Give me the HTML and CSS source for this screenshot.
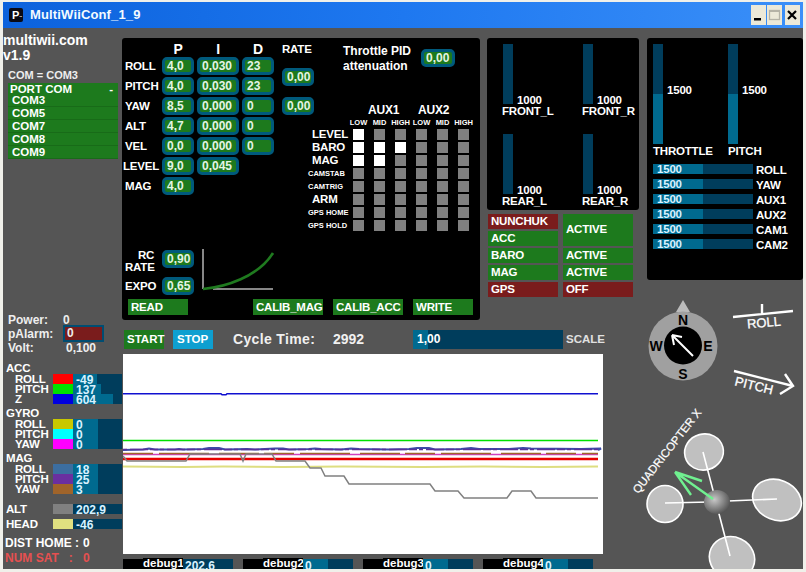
FILE: index.html
```html
<!DOCTYPE html>
<html lang="en">
<head>
<meta charset="utf-8">
<title>MultiWiiConf_1_9</title>
<link rel="stylesheet" href="styles.css">
</head>
<body>
<div class="window">
  <header class="titlebar">
    <span class="app-icon">P<small>..</small></span>
    <span class="app-title">MultiWiiConf_1_9</span>
    <div class="win-btns">
      <span class="win-btn"><svg width="14" height="20" viewBox="0 0 14 20"><rect x="3" y="13" width="7" height="2.5" fill="#000"/></svg></span>
      <span class="win-btn"><svg width="14" height="20" viewBox="0 0 14 20"><rect x="2.5" y="5.5" width="10" height="9" fill="none" stroke="#b5b3a6" stroke-width="1.3"/><rect x="2.5" y="5.5" width="10" height="1.5" fill="#b5b3a6"/></svg></span>
      <span class="win-btn close"><svg width="14" height="20" viewBox="0 0 14 20"><path d="M3 6l8 8M11 6l-8 8" stroke="#000" stroke-width="2.2" fill="none"/></svg></span>
    </div>
  </header>
  <div class="client">
    <aside class="sidebar">
      <div class="brand">multiwii.com<br>v1.9</div>
      <div class="com-current">COM = COM3</div>
      <div class="port-list">
        <div class="port-head"><span>PORT COM</span><span>-</span></div>
        <div class="port-item">COM3</div>
        <div class="port-item">COM5</div>
        <div class="port-item">COM7</div>
        <div class="port-item">COM8</div>
        <div class="port-item">COM9</div>
      </div>
      <div class="power">
        <span>Power:</span><span class="power-val">0</span>
        <span>pAlarm:</span><span class="alarm">0</span>
        <span>Volt:</span><span class="volt-val">0,100</span>
      </div>
      <div class="sensor-group first">
        <div class="group-title">ACC</div>
        <div class="sensor-row"><span class="sub">ROLL</span><i class="sw c-red"></i><span class="val" style="--fill:24px">-49</span></div>
        <div class="sensor-row"><span class="sub">PITCH</span><i class="sw c-green"></i><span class="val" style="--fill:28px">137</span></div>
        <div class="sensor-row"><span class="sub">Z</span><i class="sw c-blue"></i><span class="val" style="--fill:40px">604</span></div>
      </div>
      <div class="sensor-group">
        <div class="group-title">GYRO</div>
        <div class="sensor-row"><span class="sub">ROLL</span><i class="sw c-olive"></i><span class="val" style="--fill:25px">0</span></div>
        <div class="sensor-row"><span class="sub">PITCH</span><i class="sw c-cyan"></i><span class="val" style="--fill:25px">0</span></div>
        <div class="sensor-row"><span class="sub">YAW</span><i class="sw c-magenta"></i><span class="val" style="--fill:25px">0</span></div>
      </div>
      <div class="sensor-group">
        <div class="group-title">MAG</div>
        <div class="sensor-row"><span class="sub">ROLL</span><i class="sw c-steel"></i><span class="val" style="--fill:25px">18</span></div>
        <div class="sensor-row"><span class="sub">PITCH</span><i class="sw c-purple"></i><span class="val" style="--fill:25px">25</span></div>
        <div class="sensor-row"><span class="sub">YAW</span><i class="sw c-brown"></i><span class="val" style="--fill:25px">3</span></div>
      </div>
      <div class="sensor-row alt-row"><span>ALT</span><i class="sw c-grey"></i><span class="val" style="--fill:0px">202,9</span></div>
      <div class="sensor-row head-row"><span>HEAD</span><i class="sw c-khaki"></i><span class="val" style="--fill:0px">-46</span></div>
      <div class="gps gps-dist"><span>DIST HOME :</span><span>0</span></div>
      <div class="gps gps-sat"><span>NUM SAT &nbsp; :</span><span>0</span></div>
    </aside>

    <main class="main">
      <div class="top-row">
        <section class="panel pid-panel">
          <div class="pid-upper">
            <div class="pid-table">
              <span></span><b class="col-head">P</b><b class="col-head">I</b><b class="col-head">D</b><b class="rate-head">RATE</b>
              <span class="row-label">ROLL</span><span class="field">4,0</span><span class="field">0,030</span><span class="field">23</span><span class="field rate-a">0,00</span>
              <span class="row-label">PITCH</span><span class="field">4,0</span><span class="field">0,030</span><span class="field">23</span>
              <span class="row-label">YAW</span><span class="field">8,5</span><span class="field">0,000</span><span class="field">0</span><span class="field rate-b">0,00</span>
              <span class="row-label">ALT</span><span class="field">4,7</span><span class="field">0,000</span><span class="field">0</span><span></span>
              <span class="row-label">VEL</span><span class="field">0,0</span><span class="field">0,000</span><span class="field">0</span><span></span>
              <span class="row-label level">LEVEL</span><span class="field">9,0</span><span class="field">0,045</span><span></span><span></span>
              <span class="row-label">MAG</span><span class="field">4,0</span>
            </div>
            <div class="pid-right">
              <div class="throttle">
                <div class="throttle-label">Throttle PID<br>attenuation</div>
                <span class="field">0,00</span>
              </div>
              <div class="aux-grid">
                <span></span><b class="aux-name a1">AUX1</b><b class="aux-name a2">AUX2</b>
                <span></span><em>LOW</em><em>MID</em><em>HIGH</em><em>LOW</em><em>MID</em><em>HIGH</em>
                <span class="aux-label">LEVEL</span><i class="box on"></i><i class="box"></i><i class="box"></i><i class="box"></i><i class="box"></i><i class="box"></i>
                <span class="aux-label">BARO</span><i class="box on"></i><i class="box on"></i><i class="box on"></i><i class="box"></i><i class="box"></i><i class="box"></i>
                <span class="aux-label">MAG</span><i class="box on"></i><i class="box on"></i><i class="box"></i><i class="box"></i><i class="box"></i><i class="box"></i>
                <span class="aux-label small">CAMSTAB</span><i class="box"></i><i class="box"></i><i class="box"></i><i class="box"></i><i class="box"></i><i class="box"></i>
                <span class="aux-label small">CAMTRIG</span><i class="box"></i><i class="box"></i><i class="box"></i><i class="box"></i><i class="box"></i><i class="box"></i>
                <span class="aux-label">ARM</span><i class="box"></i><i class="box"></i><i class="box"></i><i class="box"></i><i class="box"></i><i class="box"></i>
                <span class="aux-label small">GPS HOME</span><i class="box"></i><i class="box"></i><i class="box"></i><i class="box"></i><i class="box"></i><i class="box"></i>
                <span class="aux-label small">GPS HOLD</span><i class="box"></i><i class="box"></i><i class="box"></i><i class="box"></i><i class="box"></i><i class="box"></i>
              </div>
            </div>
          </div>
          <div class="rc-row">
            <div class="rc-fields">
              <span class="row-label rc-label">RC<br>RATE</span><span class="field">0,90</span>
              <span class="row-label">EXPO</span><span class="field">0,65</span>
            </div>
            <svg class="curve" width="76" height="46" viewBox="200 248 76 46">
              <path d="M203 249V289M213 289H273" stroke="#b4b4b4" stroke-width="1.5" fill="none"/>
              <path d="M203 289C225 287 258 277 273 253" stroke="#1f7a1f" stroke-width="2.6" fill="none"/>
            </svg>
          </div>
          <div class="pid-btns">
            <span class="btn b-read">READ</span>
            <span class="btn b-mag">CALIB_MAG</span>
            <span class="btn b-acc">CALIB_ACC</span>
            <span class="btn b-write">WRITE</span>
          </div>
        </section>

        <div class="motor-col">
          <section class="panel motor-panel">
            <div class="motor"><div class="motor-top"><i class="motor-bar"></i><span>1000</span></div><div class="motor-name">FRONT_L</div></div>
            <div class="motor"><div class="motor-top"><i class="motor-bar"></i><span>1000</span></div><div class="motor-name">FRONT_R</div></div>
            <div class="motor"><div class="motor-top"><i class="motor-bar"></i><span>1000</span></div><div class="motor-name">REAR_L</div></div>
            <div class="motor"><div class="motor-top"><i class="motor-bar"></i><span>1000</span></div><div class="motor-name">REAR_R</div></div>
          </section>
          <div class="status-grid">
            <span class="st red">NUNCHUK</span><span class="st tall">ACTIVE</span>
            <span class="st">ACC</span>
            <span class="st">BARO</span><span class="st">ACTIVE</span>
            <span class="st">MAG</span><span class="st">ACTIVE</span>
            <span class="st red">GPS</span><span class="st red">OFF</span>
          </div>
        </div>

        <section class="panel rc-panel">
          <div class="sticks">
            <div class="stick"><div class="stick-top"><i class="stick-bar"></i><span>1500</span></div><div class="stick-name">THROTTLE</div></div>
            <div class="stick"><div class="stick-top"><i class="stick-bar"></i><span>1500</span></div><div class="stick-name">PITCH</div></div>
          </div>
          <div class="channels">
            <div class="channel"><span class="ch-bar">1500</span><span>ROLL</span></div>
            <div class="channel"><span class="ch-bar">1500</span><span>YAW</span></div>
            <div class="channel"><span class="ch-bar">1500</span><span>AUX1</span></div>
            <div class="channel"><span class="ch-bar">1500</span><span>AUX2</span></div>
            <div class="channel"><span class="ch-bar">1500</span><span>CAM1</span></div>
            <div class="channel"><span class="ch-bar">1500</span><span>CAM2</span></div>
          </div>
        </section>
      </div>

      <div class="controls">
        <span class="ctl start">START</span>
        <span class="ctl stop">STOP</span>
        <span class="cycle-label">Cycle Time:</span>
        <span class="cycle-val">2992</span>
        <span class="scale-bar">1,00</span>
        <span class="scale-label">SCALE</span>
      </div>

      <svg class="graph" width="480" height="200" viewBox="123 354 480 200">
        <rect x="123" y="354" width="480" height="200" fill="#fff"/>
        <g fill="none">
          <path d="M123 393.7H221l1 1h4l1-1H598" stroke="#1010d0" stroke-width="1.5"/>
          <path d="M123 440.5H598" stroke="#00e000" stroke-width="1.6"/>
          <path d="M123 454.5H598" stroke="#d040c0" stroke-width="1.5"/>
          <path d="M123 453.5H598" stroke="#a0642a" stroke-width="1.6" stroke-dasharray="30 6 50 10 40 5"/>
          <path d="M123 450l20-.5 6-1 6 1 20 0 4-.5 4 .5 20-.5 6-1 10 0 6 1.5 22-.5 8 .5 20-1 8 0 6 1 20-.5 6-.5 6 .5 20 .5 10-1 8 .5 30 .5 20-.5 8-1 12 0 6 1.5 26-.5 10-1 8 1 30 0 14-1 8 .5 50 .5 20-.5L598 450" stroke="#3c4ca8" stroke-width="2.2"/>
          <path d="M123 449.5 H598" stroke="#5a2f98" stroke-width="1.6" stroke-dasharray="4 3 18 2 8 2"/>
          <path d="M123 459H598" stroke="#e80000" stroke-width="2.4"/>
          <path d="M123 466.5l60 .5 40-.5 60 .5 60-.5 80 .5 60-.5 60 .5L598 466.5" stroke="#dede80" stroke-width="2"/>
          <path d="M123 456l4 5h59l4-7H240l3 7 3-7h26l4 7h29l5 7h11l4 8h19l5 8h81l5 7h23l6 7h43l5-7h19l5 7h62" stroke="#808080" stroke-width="1.5"/>
        </g>
      </svg>

      <div class="debug-row">
        <div class="debug"><i></i><span class="debug-name">debug1</span><span class="debug-val" style="--fill:0px">202,6</span></div>
        <div class="debug"><i></i><span class="debug-name">debug2</span><span class="debug-val" style="--fill:25px">0</span></div>
        <div class="debug"><i></i><span class="debug-name">debug3</span><span class="debug-val" style="--fill:25px">0</span></div>
        <div class="debug"><i></i><span class="debug-name">debug4</span><span class="debug-val" style="--fill:25px">0</span></div>
      </div>

      <svg class="attitude" width="186" height="279" viewBox="617 290 186 279">
        <!-- compass -->
        <path d="M683 300l7 12h-3v8h-8v-8h-3z" fill="#bcbcbc"/>
        <circle cx="683" cy="346" r="34.5" fill="#a0a0a0"/>
        <circle cx="683" cy="345.5" r="19" fill="#000"/>
        <g class="compass-letter">
          <text x="683" y="325">N</text>
          <text x="683" y="379">S</text>
          <text x="656" y="351">W</text>
          <text x="708" y="351">E</text>
        </g>
        <path d="M693 356L672 335M672 335l10 2M672 335l2 10" stroke="#fff" stroke-width="2" fill="none"/>
        <!-- roll -->
        <path d="M733 317L793 311M762 304V314" stroke="#fff" stroke-width="2.4" fill="none"/>
        <text class="att-label" x="764" y="327" transform="rotate(-5 764 323)">ROLL</text>
        <!-- pitch -->
        <path d="M734 371L793 386M785 374L793 386L780 394" stroke="#fff" stroke-width="2.4" fill="none"/>
        <text class="att-label" x="754" y="390" transform="rotate(14 754 386)">PITCH</text>
        <!-- quad -->
        <g stroke="#fff" fill="#c0c0c0">
          <ellipse cx="704" cy="452" rx="19.5" ry="18" stroke-width="1.6" transform="rotate(-15 704 452)"/>
          <ellipse cx="665" cy="504" rx="18" ry="18.5" stroke-width="1.6"/>
          <ellipse cx="777" cy="500" rx="25" ry="20" stroke-width="1.6" transform="rotate(22 777 500)"/>
          <ellipse cx="732" cy="558" rx="23" ry="21" stroke-width="1.6" transform="rotate(25 732 558)"/>
          <path d="M703 452L715 498M665 503L710 502M777 499L728 501M730 556L718 510" stroke-width="1.6" fill="none"/>
        </g>
        <defs>
          <radialGradient id="hub" cx="40%" cy="40%" r="65%">
            <stop offset="0" stop-color="#c8c8c8"/>
            <stop offset="1" stop-color="#505050"/>
          </radialGradient>
        </defs>
        <ellipse cx="717" cy="502" rx="13" ry="12" fill="url(#hub)"/>
        <path d="M713 499L675 472M675 472L702 481M675 472L691 495" stroke="#70f090" stroke-width="2.4" fill="none"/>
        <text class="quad-label" x="667" y="455" transform="rotate(-52 667 451)">QUADRICOPTER X</text>
      </svg>
    </main>
  </div>
</div>
</body>
</html>
```

FILE: styles.css
```css
* { box-sizing: border-box; }
html, body { margin: 0; padding: 0; background: #ece9d8; }
body {
  font-family: "Liberation Sans", Arial, sans-serif;
  font-size: 11.5px;
  letter-spacing: -.2px;
  font-weight: 700;
  color: #fff;
  line-height: 12px;
}
i, em { font-style: normal; display: block; }

.window {
  width: 806px;
  height: 572px;
  display: flex;
  flex-direction: column;
  border-style: solid;
  border-color: #f0f0ea;
  border-width: 2px 3px 3px 3px;
}

/* title bar */
.titlebar {
  height: 26px;
  flex: none;
  display: flex;
  align-items: center;
  padding: 0 3px 0 6px;
  background: linear-gradient(90deg, #0c62dc, #1e78f0 50%, #3a8ff8);
}
.app-icon {
  width: 14px;
  height: 14px;
  background: #0a0a14;
  border-radius: 2px;
  font-size: 11px;
  line-height: 14px;
  padding-left: 3px;
  display: flex;
}
.app-icon small { font-size: 6px; }
.app-title {
  margin-left: 7px;
  font-size: 13px;
  letter-spacing: .15px;
  color: #f4fbff;
}
.win-btns { margin-left: auto; display: flex; gap: 1px; }
.win-btn {
  width: 15px;
  height: 20px;
  background: #ece9d8;
  display: block;
}
.win-btn svg { display: block; }
.win-btn.close { margin-left: 2px; }

/* client */
.client {
  flex: 1;
  display: flex;
  background: #555;
  min-height: 0;
}

/* sidebar */
.sidebar { width: 119px; flex: none; padding-top: 5px; }
.brand { font-size: 14px; line-height: 15px; letter-spacing: 0; }
.com-current { margin: 6px 0 0 5px; color: #eee; font-size: 11px; letter-spacing: 0; }
.port-list { margin: 2px 0 0 5px; width: 110px; background: #1d7a1d; }
.port-head { display: flex; justify-content: space-between; padding: 0 5px 0 2px; height: 11px; line-height: 12px; letter-spacing: 0; }
.port-item { height: 13px; padding-left: 4px; line-height: 13px; border-bottom: 1px solid #186b18; letter-spacing: 0; }

.power {
  margin: 156px 0 0 5px;
  display: grid;
  grid-template-columns: 55px 41px;
  grid-template-rows: 10px 17px 12px;
  align-items: center;
  color: #eee;
  font-size: 12px;
  letter-spacing: 0;
}
.alarm {
  height: 17px;
  border: 2px solid #004d72;
  background: #7a1c1c;
  padding-left: 2px;
  line-height: 13px;
}
.volt-val { padding-left: 3px; }

.sensor-group { margin: 3px 0 0 3px; }
.sensor-group.first { margin-top: 8px; }
.group-title { height: 12px; }
.sensor-row {
  display: grid;
  grid-template-columns: 47px 20px 49px;
  height: 10px;
  line-height: 10px;
}
.sub { padding-left: 9px; }
.sw { height: 10px; }
.val {
  padding-left: 3px;
  font-size: 12px;
  line-height: 12px;
  height: 10px;
  letter-spacing: 0;
  color: #d8f2ff;
  background: linear-gradient(90deg, #006a8f var(--fill), #003d5c var(--fill));
}
.alt-row { margin: 10px 0 0 3px; }
.head-row { margin: 5px 0 0 3px; }
.c-red { background: #f00; }
.c-green { background: #00e000; }
.c-blue { background: #0000e0; }
.c-olive { background: #c8c800; }
.c-cyan { background: #00ffff; }
.c-magenta { background: #ff00ff; }
.c-steel { background: #3c6ea0; }
.c-purple { background: #6a2fa0; }
.c-brown { background: #a0642a; }
.c-grey { background: #808080; }
.c-khaki { background: #e0e080; }

.gps { display: grid; grid-template-columns: 78px auto; margin-left: 2px; font-size: 12px; letter-spacing: 0; }
.gps-dist { margin-top: 8px; }
.gps-sat { margin-top: 3px; color: #e65050; }

/* main */
.main { flex: 1; min-width: 0; position: relative; padding-top: 10px; }
.top-row { display: flex; align-items: flex-start; }
.panel { background: #000; border-radius: 3px; }

/* PID panel */
.pid-panel { width: 358px; height: 282px; margin-right: 7px; padding-left: 3px; }
.pid-upper { display: flex; height: 212px; }
.pid-table {
  width: 189px;
  margin-right: -6px;
  padding-top: 4px;
  display: grid;
  grid-template-columns: 34px 32px 42px 32px 37px;
  grid-template-rows: 15px repeat(7, 20px);
  column-gap: 3px;
  align-items: start;
  align-self: flex-start;
  flex: none;
}
.col-head { font-size: 14px; line-height: 14px; text-align: center; }
.rate-head { line-height: 14px; margin-left: 5px; white-space: nowrap; }
.row-label { line-height: 18px; white-space: nowrap; }
.row-label.level { margin-left: -2px; }
.field {
  display: block;
  height: 18px;
  border: 3px solid #005a7c;
  border-radius: 5px;
  background: #1d7a1d;
  padding-left: 2px;
  line-height: 12px;
  font-size: 12px;
  letter-spacing: 0;
  color: #e4f5e4;
}
.rate-a { grid-column: 5; grid-row: 2 / span 2; margin: 11px 0 0 5px; }
.rate-b { grid-column: 5; grid-row: 4; margin-left: 5px; }

.pid-right { width: 171px; flex: none; }
.throttle { display: flex; align-items: flex-start; padding: 6px 0 0 35px; height: 66px; }
.throttle-label { width: 78px; font-size: 12px; line-height: 15px; letter-spacing: 0; }
.throttle .field { width: 34px; margin-top: 5px; }
.aux-grid {
  display: grid;
  grid-template-columns: 35px repeat(6, 11px);
  grid-template-rows: 12px 9px repeat(8, 11px);
  column-gap: 10px;
  row-gap: 2px;
}
.aux-name { grid-column: span 3; white-space: nowrap; font-size: 12px; }
.aux-name.a1 { padding-left: 15px; }
.aux-name.a2 { padding-left: 2px; }
.aux-grid em { font-size: 7.5px; line-height: 9px; display: flex; justify-content: center; white-space: nowrap; letter-spacing: 0; }
.aux-label { padding-left: 4px; line-height: 11px; white-space: nowrap; }
.aux-label.small { padding-left: 0; font-size: 7.5px; letter-spacing: 0; }
.box { background: #808080; height: 11px; }
.box.on { background: #fff; }

.rc-row { display: flex; height: 49px; }
.rc-fields {
  display: grid;
  grid-template-columns: 37px 32px;
  grid-template-rows: 27px 18px;
  align-items: center;
}
.rc-fields .field { align-self: start; }
.rc-label { line-height: 12px; text-indent: 13px; align-self: start; margin-top: -1px; }
.curve { display: block; margin-left: 6px; margin-top: -2px; }

.pid-btns { display: flex; padding-left: 3px; }
.btn { display: block; height: 16px; background: #1d7a1d; padding-left: 3px; line-height: 16px; white-space: nowrap; }
.b-read { width: 60px; margin-right: 65px; }
.b-mag { width: 70px; margin-right: 10px; }
.b-acc { width: 70px; margin-right: 10px; }
.b-write { width: 60px; }

/* motors */
.motor-col { width: 152px; margin-right: 8px; }
.motor-panel {
  height: 172px;
  padding: 6px 0 0 15px;
  display: grid;
  grid-template-columns: 80px 57px;
  grid-template-rows: 90px 73px;
}
.motor-top { display: flex; align-items: flex-end; height: 62px; }
.motor-bar { width: 10px; height: 60px; background: #003d5c; align-self: flex-start; margin-left: 1px; }
.motor-top span { margin-left: 4px; line-height: 11px; }
.motor-name { line-height: 11px; }
.status-grid {
  margin: 4px 0 0 1px;
  display: grid;
  grid-template-columns: 70px 70px;
  grid-auto-rows: 15px;
  gap: 2px 5px;
}
.st { background: #1d7a1d; padding-left: 3px; line-height: 15px; }
.st.red { background: #7a1c1c; }
.st.tall { grid-row: span 2; line-height: 30px; }

/* RC panel */
.rc-panel { width: 156px; height: 242px; padding: 6px 0 0 6px; }
.sticks { display: flex; }
.stick { width: 80px; }
.stick-top { display: flex; align-items: center; height: 100px; }
.stick-bar {
  width: 10px;
  height: 100px;
  background: linear-gradient(#003d5c 50%, #006a8f 50%);
}
.stick-top span { margin: 0 0 8px 4px; }
.stick-name { margin-top: 1px; line-height: 12px; }
.channels { margin-top: 7px; display: flex; flex-direction: column; gap: 5px; }
.channel { display: flex; height: 10px; line-height: 12px; gap: 3px; }
.ch-bar {
  width: 100px;
  height: 10px;
  line-height: 11px;
  padding-left: 4px;
  color: #d8f2ff;
  background: linear-gradient(90deg, #006a8f 50%, #003d5c 50%);
}

/* scope controls */
.controls { display: flex; align-items: center; height: 20px; margin: 9px 0 5px 2px; }
.ctl { display: block; height: 19px; padding-left: 3px; line-height: 19px; font-size: 11.5px; letter-spacing: 0; }
.start { width: 40px; background: #1d7a1d; }
.stop { width: 40px; background: #0e9fd0; margin-left: 9px; padding-left: 4px; }
.cycle-label { margin-left: 20px; font-size: 14px; letter-spacing: .35px; width: 100px; color: #f0f0f0; }
.cycle-val { font-size: 14px; letter-spacing: 0; width: 80px; color: #f0f0f0; }
.scale-bar {
  width: 150px;
  height: 19px;
  padding-left: 4px;
  line-height: 19px;
  font-size: 12px;
  letter-spacing: 0;
  background: linear-gradient(90deg, #006a8f 15px, #003d5c 15px);
}
.scale-label { margin-left: 3px; color: #e0e0e0; letter-spacing: 0; }

.graph { display: block; margin-left: 1px; }
.debug-row { display: flex; gap: 10px; margin: 5px 0 0 1px; height: 10px; }
.debug { display: flex; width: 110px; height: 10px; }
.debug i { width: 20px; background: #000; }
.debug-name { width: 40px; background: #000; line-height: 10px; margin-top: -1px; height: 11px; letter-spacing: 0; }
.debug-val {
  width: 50px;
  padding-left: 2px;
  overflow: hidden;
  font-size: 12px;
  line-height: 14px;
  letter-spacing: 0;
  color: #d8f2ff;
  background: linear-gradient(90deg, #006a8f var(--fill), #003d5c var(--fill));
}

/* drawn instruments over the canvas */
.attitude { position: absolute; right: 0; bottom: 0; display: block; }
.compass-letter text { font-size: 14px; fill: #000; text-anchor: middle; font-weight: 700; letter-spacing: 0; }
.att-label { font-size: 13px; fill: #fff; text-anchor: middle; font-weight: 400; stroke: #fff; stroke-width: .3px; letter-spacing: 0; }
.quad-label { font-size: 11.5px; fill: #fff; text-anchor: middle; font-weight: 400; stroke: #fff; stroke-width: .2px; letter-spacing: 0; }
```
